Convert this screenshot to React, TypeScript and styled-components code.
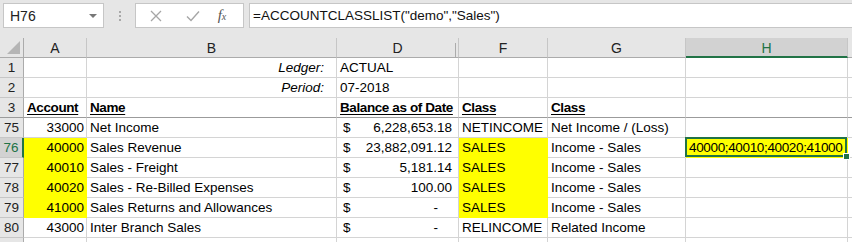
import React from 'react';
import styled, { createGlobalStyle, css } from 'styled-components';

// Excel-like sheet: formula bar + frozen header rows + data rows

const GlobalStyle = createGlobalStyle`
  html, body {
    margin: 0;
    padding: 0;
    background: #ffffff;
  }
  body {
    font-family: 'Liberation Sans', Arial, sans-serif;
    -webkit-font-smoothing: antialiased;
  }
`;

const green = '#217346';
const grid = '#d4d4d4';

const Page = styled.div`
  width: 852px;
  height: 242px;
  overflow: hidden;
  display: flex;
  flex-direction: column;
  background: #e6e6e6;
`;

const FormulaBar = styled.div`
  flex-shrink: 0;
  height: 38px;
  box-sizing: border-box;
  padding: 3px 0 0 3px;
  display: flex;
  align-items: flex-start;
`;

const NameBox = styled.div`
  width: 101px;
  height: 25px;
  box-sizing: border-box;
  border: 1px solid #c6c6c6;
  background: #fff;
  display: flex;
  align-items: center;
  justify-content: space-between;
  padding: 0 6px 0 6px;
  font-size: 14px;
  color: #222;
`;

const DropArrow = styled.span`
  width: 0;
  height: 0;
  border-left: 4px solid transparent;
  border-right: 4px solid transparent;
  border-top: 4px solid #777;
`;

const Grip = styled.div`
  width: 31px;
  height: 25px;
  display: flex;
  flex-direction: column;
  align-items: center;
  justify-content: center;
  gap: 2px;
`;

const GripDot = styled.span`
  width: 2px;
  height: 2px;
  background: #a8a8a8;
`;

const ButtonBox = styled.div`
  width: 109px;
  height: 25px;
  box-sizing: border-box;
  border: 1px solid #c6c6c6;
  background: #fff;
  display: grid;
  grid-template-columns: 40px 33px 1fr;
  align-items: center;
  justify-items: center;
`;

const Fx = styled.span`
  font-family: 'Liberation Serif', 'Times New Roman', serif;
  font-style: italic;
  font-size: 15px;
  color: #555;
  padding-right: 8px;
  sub {
    font-size: 10px;
    vertical-align: baseline;
  }
`;

const FormulaInput = styled.div`
  flex: 1;
  margin-left: 5px;
  height: 25px;
  box-sizing: border-box;
  border: 1px solid #c6c6c6;
  border-right: none;
  background: #fff;
  display: flex;
  align-items: center;
  padding-left: 3px;
  font-size: 13.5px;
  color: #111;
`;

const Sheet = styled.div`
  flex-shrink: 0;
  display: grid;
  grid-template-columns: 24px 63px 250px 122px 89px 138px 162px 1fr;
  grid-auto-rows: 20px;
  background: #fff;
`;

const Corner = styled.div`
  position: relative;
  background: #e6e6e6;
  border-right: 1px solid #ababab;
  border-bottom: 1px solid #ababab;
  box-sizing: border-box;
  &::after {
    content: '';
    position: absolute;
    right: 3px;
    bottom: 3px;
    width: 0;
    height: 0;
    border-left: 13px solid transparent;
    border-bottom: 13px solid #b5b5b5;
  }
`;

const ColHead = styled.div<{ $active?: boolean; $hidden?: boolean }>`
  position: relative;
  box-sizing: border-box;
  background: ${(p) => (p.$active ? '#d2d2d2' : '#e6e6e6')};
  color: ${(p) => (p.$active ? green : '#222')};
  border-right: 1px solid #c6c6c6;
  border-bottom: ${(p) => (p.$active ? `2px solid ${green}` : '1px solid #ababab')};
  font-size: 14px;
  display: flex;
  align-items: center;
  justify-content: center;
  padding-top: 1px;
  ${(p) =>
    p.$hidden &&
    css`
      &::after {
        content: '';
        position: absolute;
        right: 2px;
        top: 5px;
        bottom: 0;
        width: 1px;
        background: #ababab;
      }
    `}
`;

const RowHead = styled.div<{ $active?: boolean; $freeze?: boolean }>`
  box-sizing: border-box;
  background: ${(p) => (p.$active ? '#d2d2d2' : '#e6e6e6')};
  color: ${(p) => (p.$active ? green : '#222')};
  border-right: ${(p) => (p.$active ? `2px solid ${green}` : '1px solid #ababab')};
  border-bottom: 1px solid ${(p) => (p.$freeze ? '#9b9b9b' : '#c6c6c6')};
  font-size: 13.5px;
  display: flex;
  align-items: flex-end;
  justify-content: center;
  padding-bottom: 2px;
`;

type Align = 'left' | 'right';

const Cell = styled.div<{
  $align?: Align;
  $bold?: boolean;
  $italic?: boolean;
  $underline?: boolean;
  $fill?: boolean;
  $freeze?: boolean;
  $pad?: number;
}>`
  position: relative;
  box-sizing: border-box;
  background: ${(p) => (p.$fill ? '#ffff00' : '#fff')};
  border-right: 1px solid ${(p) => (p.$fill ? '#ffff00' : grid)};
  border-bottom: 1px solid ${(p) => (p.$freeze ? '#9b9b9b' : p.$fill ? '#ffff00' : grid)};
  font-size: 13.5px;
  color: #000;
  white-space: nowrap;
  overflow: visible;
  display: flex;
  align-items: flex-end;
  justify-content: ${(p) => (p.$align === 'right' ? 'flex-end' : 'flex-start')};
  padding: 0 ${(p) => p.$pad ?? 2}px 2px 3px;
  font-weight: ${(p) => (p.$bold ? 700 : 400)};
  font-style: ${(p) => (p.$italic ? 'italic' : 'normal')};
  text-decoration: ${(p) => (p.$underline ? 'underline' : 'none')};
  text-underline-offset: 2px;
  letter-spacing: ${(p) => (p.$bold ? '-0.4px' : 'normal')};
`;

const Money = styled(Cell)`
  justify-content: space-between;
  padding-left: 6px;
  padding-right: ${(p) => p.$pad ?? 6}px;
`;

const Selected = styled(Cell)`
  letter-spacing: -0.35px;
  &::after {
    content: '';
    position: absolute;
    left: -1px;
    top: -1px;
    right: 0;
    bottom: 0;
    border: 2px solid ${green};
    pointer-events: none;
  }
  &::before {
    content: '';
    position: absolute;
    right: -3px;
    bottom: -3px;
    width: 5px;
    height: 5px;
    background: ${green};
    border: 1px solid #fff;
    z-index: 2;
  }
`;

function CloseIcon() {
  return (
    <svg width="12" height="12" viewBox="0 0 12 12">
      <path d="M1 1 L11 11 M11 1 L1 11" stroke="#a6a6a6" strokeWidth="1.3" fill="none" />
    </svg>
  );
}

function CheckIcon() {
  return (
    <svg width="14" height="12" viewBox="0 0 14 12">
      <path d="M1 6.5 L5 10.5 L13 1.5" stroke="#a6a6a6" strokeWidth="1.4" fill="none" />
    </svg>
  );
}

type Entry = {
  n: string;
  a?: string;
  b?: string;
  amount?: string;
  f?: string;
  g?: string;
  fill?: boolean;
};

const rows: Entry[] = [
  { n: '75', a: '33000', b: 'Net Income', amount: '6,228,653.18', f: 'NETINCOME', g: 'Net Income / (Loss)' },
  { n: '76', a: '40000', b: 'Sales Revenue', amount: '23,882,091.12', f: 'SALES', g: 'Income - Sales', fill: true },
  { n: '77', a: '40010', b: 'Sales - Freight', amount: '5,181.14', f: 'SALES', g: 'Income - Sales', fill: true },
  { n: '78', a: '40020', b: 'Sales - Re-Billed Expenses', amount: '100.00', f: 'SALES', g: 'Income - Sales', fill: true },
  { n: '79', a: '41000', b: 'Sales Returns and Allowances', amount: '-', f: 'SALES', g: 'Income - Sales', fill: true },
  { n: '80', a: '43000', b: 'Inter Branch Sales', amount: '-', f: 'RELINCOME', g: 'Related Income' },
];

const columns = ['A', 'B', 'D', 'F', 'G', 'H', ''];

function App() {
  return (
    <Page>
      <GlobalStyle />
      <FormulaBar>
        <NameBox>
          <span>H76</span>
          <DropArrow />
        </NameBox>
        <Grip>
          <GripDot />
          <GripDot />
          <GripDot />
        </Grip>
        <ButtonBox>
          <CloseIcon />
          <CheckIcon />
          <Fx>
            f<sub>x</sub>
          </Fx>
        </ButtonBox>
        <FormulaInput>=ACCOUNTCLASSLIST("demo","Sales")</FormulaInput>
      </FormulaBar>

      <Sheet>
        <Corner />
        {columns.map((c) => (
          <ColHead key={c || 'I'} $active={c === 'H'} $hidden={c === 'D'}>
            {c}
          </ColHead>
        ))}

        <RowHead>1</RowHead>
        <Cell />
        <Cell $align="right" $italic $pad={12}>
          Ledger:
        </Cell>
        <Cell>ACTUAL</Cell>
        <Cell />
        <Cell />
        <Cell />
        <Cell />

        <RowHead>2</RowHead>
        <Cell />
        <Cell $align="right" $italic $pad={12}>
          Period:
        </Cell>
        <Cell>07-2018</Cell>
        <Cell />
        <Cell />
        <Cell />
        <Cell />

        <RowHead $freeze>3</RowHead>
        <Cell $freeze $bold $underline>
          Account
        </Cell>
        <Cell $freeze $bold $underline>
          Name
        </Cell>
        <Cell $freeze $bold $underline>
          Balance as of Date
        </Cell>
        <Cell $freeze $bold $underline>
          Class
        </Cell>
        <Cell $freeze $bold $underline>
          Class
        </Cell>
        <Cell $freeze />
        <Cell $freeze />

        {rows.map((r) => (
          <React.Fragment key={r.n}>
            <RowHead $active={r.n === '76'}>{r.n}</RowHead>
            <Cell $align="right" $fill={r.fill}>
              {r.a}
            </Cell>
            <Cell>{r.b}</Cell>
            <Money $pad={r.amount === '-' ? 20 : 6}>
              <span>$</span>
              <span>{r.amount}</span>
            </Money>
            <Cell $fill={r.fill}>{r.f}</Cell>
            <Cell>{r.g}</Cell>
            {r.n === '76' ? <Selected $fill>40000;40010;40020;41000</Selected> : <Cell />}
            <Cell />
          </React.Fragment>
        ))}

        <RowHead />
        {columns.map((c) => (
          <Cell key={c || 'I'} />
        ))}
      </Sheet>
    </Page>
  );
}

export default App;
